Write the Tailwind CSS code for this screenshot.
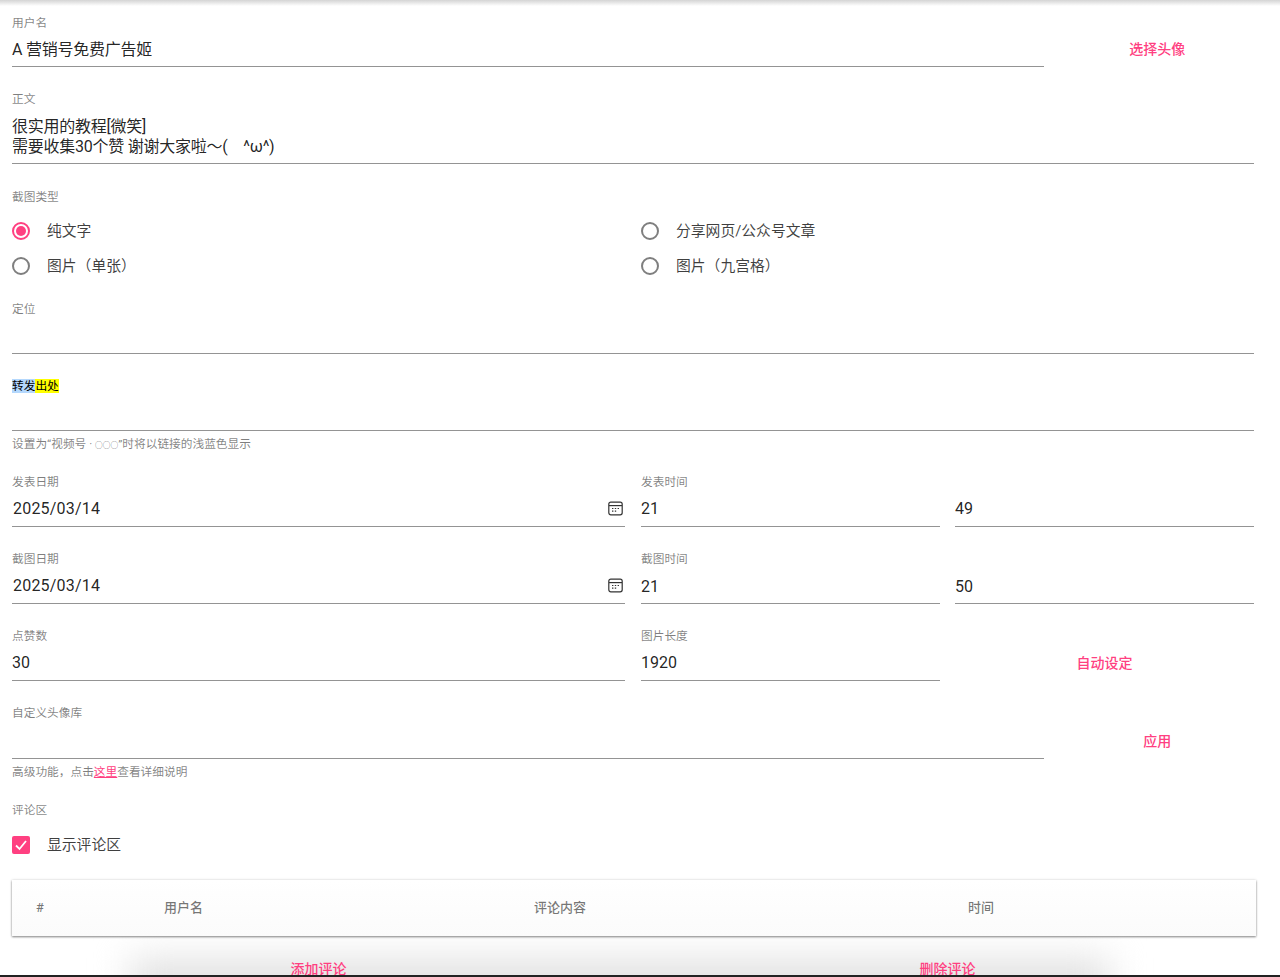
<!DOCTYPE html>
<html lang="zh-CN">
<head>
  <meta charset="UTF-8">
  <title>截图生成</title>
  <script src="https://cdn.jsdelivr.net/npm/@tailwindcss/browser@4"></script>
</head>
<body class="bg-white h-[977px] overflow-hidden font-['Roboto','Noto_Sans_CJK_SC',sans-serif] text-black/87">
  <main class="relative h-[975px] overflow-hidden pl-3 pr-[26px] pt-3.5">
    <!-- top bar shadow -->
    <div class="absolute inset-x-0 top-0 h-1.5 bg-gradient-to-b from-[#d4d4d4] to-white"></div>
    <!-- soft glow under the table -->
    <div class="absolute left-[130px] right-[170px] top-[958px] h-[60px] bg-[#e2e2e2] blur-[18px]"></div>

    <div class="relative">
      <!-- username -->
      <div class="grid grid-cols-6 gap-x-4 mb-6">
        <div class="col-span-5">
          <label class="block h-4 text-[11.7px] leading-[18px] text-black/50">用户名</label>
          <div class="h-[37px] border-b border-[#949494] pt-2 text-base leading-6 tracking-[-0.25px]">A 营销号免费广告姬</div>
        </div>
        <button class="h-[53px] pt-[17px] text-sm font-medium text-[#ff4081]">选择头像</button>
      </div>

      <!-- body text -->
      <div class="mb-[25px]">
        <label class="block h-4 text-[11.7px] leading-4 text-black/50">正文</label>
        <div class="h-[57px] border-b border-[#949494] pt-2.5 text-base leading-5 tracking-[-0.25px]">很实用的教程[微笑]<br>需要收集30个赞 谢谢大家啦～(&nbsp;&nbsp;&nbsp; <span class="ml-px">^ω^)</span></div>
      </div>

      <!-- screenshot type -->
      <div class="h-[112px]">
        <label class="block h-4 text-[11.7px] leading-4 text-black/50">截图类型</label>
        <div class="grid grid-cols-2 gap-x-4 pt-2 text-[14.8px] text-black/75">
          <div class="flex h-[35.5px] items-center gap-[17px]">
            <span class="flex size-[18px] items-center justify-center rounded-full border-2 border-[#ff4081]"><span class="size-2.5 rounded-full bg-[#ff4081]"></span></span>
            纯文字
          </div>
          <div class="flex h-[35.5px] items-center gap-[17px]">
            <span class="size-[18px] rounded-full border-2 border-[#7f7f7f]"></span>
            分享网页/公众号文章
          </div>
          <div class="flex h-[35.5px] items-center gap-[17px]">
            <span class="size-[18px] rounded-full border-2 border-[#7f7f7f]"></span>
            图片（单张）
          </div>
          <div class="flex h-[35.5px] items-center gap-[17px]">
            <span class="size-[18px] rounded-full border-2 border-[#7f7f7f]"></span>
            图片（九宫格）
          </div>
        </div>
      </div>

      <!-- location -->
      <div class="mb-6">
        <label class="block h-4 text-[11.7px] leading-4 text-black/50">定位</label>
        <div class="h-[37px] border-b border-[#949494]"></div>
      </div>

      <!-- forward source -->
      <div class="mb-[23px]">
        <label class="block h-4 text-[11.7px] leading-4 text-black"><span class="bg-[#b4d8fd]">转发</span><span class="bg-[#ffff00]">出处</span></label>
        <div class="h-[37px] border-b border-[#949494]"></div>
        <p class="h-5 pt-[5px] text-[11.7px] leading-4 text-black/50">设置为“视频号 · <span class="text-[7.7px] text-black/70">○○○</span>”时将以链接的浅蓝色显示</p>
      </div>

      <!-- publish time -->
      <div class="grid grid-cols-2 gap-x-4 mb-6">
        <div>
          <label class="block h-4 text-[11.7px] leading-4 text-black/50">发表日期</label>
          <div class="flex h-[37px] items-center justify-between border-b border-[#949494] pl-px pr-0.5 pt-0.5 text-base tracking-[0.2px]">
            2025/03/14
            <svg class="size-[15px] -mt-px" viewBox="0 0 15 15" fill="none" stroke="#333" stroke-width="1.2"><rect x="0.8" y="1.2" width="13.4" height="12.6" rx="2"/><path d="M1 4.6H14"/><path d="M4 7.5H5.4M6.8 7.5H8.2M9.6 7.5H11M4 10.2H5.4M6.8 10.2H8.2"/></svg>
          </div>
        </div>
        <div class="grid grid-cols-2 gap-x-[15px]">
          <div>
            <label class="block h-4 text-[11.7px] leading-4 text-black/50">发表时间</label>
            <div class="flex h-[37px] items-center border-b border-[#949494] pt-0.5 text-base">21</div>
          </div>
          <div class="pt-4">
            <div class="flex h-[37px] items-center border-b border-[#949494] pt-0.5 text-base">49</div>
          </div>
        </div>
      </div>

      <!-- capture time -->
      <div class="grid grid-cols-2 gap-x-4 mb-6">
        <div>
          <label class="block h-4 text-[11.7px] leading-4 text-black/50">截图日期</label>
          <div class="flex h-[37px] items-center justify-between border-b border-[#949494] pl-px pr-0.5 pt-0.5 text-base tracking-[0.2px]">
            2025/03/14
            <svg class="size-[15px] -mt-px" viewBox="0 0 15 15" fill="none" stroke="#333" stroke-width="1.2"><rect x="0.8" y="1.2" width="13.4" height="12.6" rx="2"/><path d="M1 4.6H14"/><path d="M4 7.5H5.4M6.8 7.5H8.2M9.6 7.5H11M4 10.2H5.4M6.8 10.2H8.2"/></svg>
          </div>
        </div>
        <div class="grid grid-cols-2 gap-x-[15px]">
          <div>
            <label class="block h-4 text-[11.7px] leading-4 text-black/50">截图时间</label>
            <div class="flex h-[37px] items-center border-b border-[#949494] pt-1 text-base">21</div>
          </div>
          <div class="pt-4">
            <div class="flex h-[37px] items-center border-b border-[#949494] pt-1 text-base">50</div>
          </div>
        </div>
      </div>

      <!-- likes / image length -->
      <div class="grid grid-cols-2 gap-x-4 mb-6">
        <div>
          <label class="block h-4 text-[11.7px] leading-4 text-black/50">点赞数</label>
          <div class="flex h-[37px] items-center border-b border-[#949494] pt-0.5 text-base">30</div>
        </div>
        <div class="grid grid-cols-2 gap-x-[15px]">
          <div>
            <label class="block h-4 text-[11.7px] leading-4 text-black/50">图片长度</label>
            <div class="flex h-[37px] items-center border-b border-[#949494] pt-0.5 text-base">1920</div>
          </div>
          <button class="h-[53px] pt-[17px] text-sm font-medium text-[#ff4081]">自动设定</button>
        </div>
      </div>

      <!-- custom avatars -->
      <div class="grid grid-cols-6 gap-x-4 mb-[23px]">
        <div class="col-span-5">
          <label class="block h-4 text-[11.7px] leading-4 text-black/50">自定义头像库</label>
          <div class="h-[38px] border-b border-[#949494]"></div>
          <p class="h-5 pt-[5px] text-[11.7px] leading-4 text-black/50">高级功能，点击<a href="#" class="text-[#ff4081] underline">这里</a>查看详细说明</p>
        </div>
        <button class="h-[53px] pt-[19px] text-sm font-medium text-[#ff4081]">应用</button>
      </div>

      <!-- comments -->
      <label class="block h-4 text-[11.7px] leading-4 text-black/50">评论区</label>
      <div class="flex h-[54px] items-center gap-[17px] text-[14.8px] text-black/75">
        <span class="flex size-[18px] items-center justify-center rounded-[2px] bg-[#ff4081]">
          <svg class="size-3.5" viewBox="0 0 14 14" fill="none" stroke="#fff" stroke-width="1.8"><path d="M2 7.5L5.5 11L12 3"/></svg>
        </span>
        显示评论区
      </div>

      <table class="mt-2 w-[1244px] table-fixed bg-gradient-to-b from-white to-[#fbfbfb] shadow-[0_1px_2px_rgba(0,0,0,0.45),0_0_3px_rgba(0,0,0,0.12)]">
        <thead>
          <tr class="h-[56px] text-left text-[13px] font-medium text-black/54">
            <th class="w-[152px] pl-6 font-medium">#</th>
            <th class="w-[370px] font-medium">用户名</th>
            <th class="w-[434px] font-medium">评论内容</th>
            <th class="font-medium">时间</th>
          </tr>
        </thead>
      </table>

      <div class="grid grid-cols-2 gap-x-4 pt-[23px] text-center text-sm font-medium text-[#ff4081]">
        <button>添加评论</button>
        <button>删除评论</button>
      </div>
    </div>
  </main>
  <div class="h-0.5 bg-[#222]"></div>
</body>
</html>
